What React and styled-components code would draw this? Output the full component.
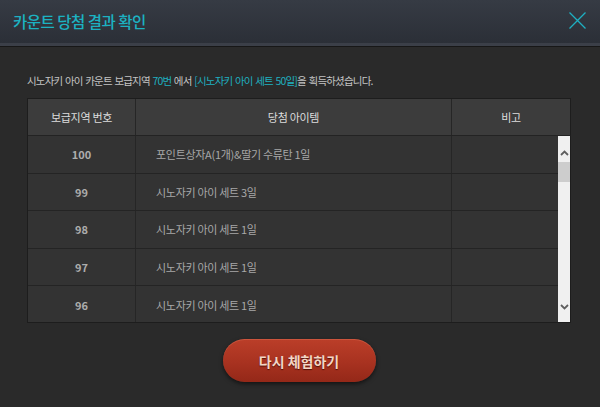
import React from "react";
import styled, { createGlobalStyle } from "styled-components";

const GlobalStyle = createGlobalStyle`
  html, body {
    margin: 0;
    padding: 0;
    background: #2a2a2a;
  }
  body {
    font-family: "Noto Sans CJK KR", "Noto Sans", sans-serif;
  }
  * {
    box-sizing: border-box;
  }
`;

const Window = styled.div`
  width: 600px;
  height: 407px;
  background: #2a2a2a;
  overflow: hidden;
`;

const Header = styled.div`
  display: flex;
  align-items: center;
  justify-content: space-between;
  height: 46px;
  padding: 0 14px 2px 13px;
  background: linear-gradient(#363b44, #2b2f37);
  border-bottom: 3px solid #3b3f48;
  box-shadow: 0 1px 0 #171717;
`;

const Title = styled.h1`
  margin: 0;
  font-size: 15.5px;
  font-weight: 500;
  color: #1cb2c2;
  letter-spacing: -0.5px;
`;

const CloseButton = styled.button`
  display: flex;
  padding: 0;
  border: 0;
  background: none;
  cursor: pointer;
`;

const Body = styled.div`
  padding: 28px 29px 0 27px;
`;

const Info = styled.p`
  margin: 0 0 10px;
  font-size: 10.5px;
  line-height: 14px;
  color: #c4c4c4;
  letter-spacing: -0.8px;
  word-spacing: 1px;
`;

const Accent = styled.span`
  color: #1fb0c0;
`;

const Table = styled.div`
  width: 544px;
  border: 1px solid #1d1d1d;
  border-bottom: 0;
  border-right: 0;
`;

const HeadRow = styled.div`
  display: grid;
  grid-template-columns: 107px 316px 1fr;
  height: 37px;
  background: #3c3c3c;
  border-bottom: 1px solid #232323;
  border-right: 1px solid #1d1d1d;
`;

const HeadCell = styled.div`
  display: flex;
  align-items: center;
  justify-content: center;
  font-size: 11px;
  color: #dcdcdc;
  letter-spacing: -0.3px;
  border-left: ${(p) => (p.first ? "0" : "1px solid #262626")};
`;

const BodyArea = styled.div`
  display: flex;
  height: 187px;
  border-bottom: 1px solid #1d1d1d;
`;

const Rows = styled.div`
  flex: 1;
  overflow: hidden;
`;

const Row = styled.div`
  display: grid;
  grid-template-columns: 107px 316px 1fr;
  height: ${(p) => (p.last ? "37px" : "37.5px")};
  background: #333333;
  border-bottom: ${(p) => (p.last ? "0" : "1px solid #242424")};
`;

const NumCell = styled.div`
  display: flex;
  align-items: center;
  justify-content: center;
  font-size: 11px;
  font-weight: 700;
  color: #adadad;
`;

const ItemCell = styled.div`
  display: flex;
  align-items: center;
  padding-left: 20px;
  font-size: 11px;
  color: #a8a8a8;
  border-left: 1px solid #262626;
  letter-spacing: -0.3px;
`;

const NoteCell = styled.div`
  border-left: 1px solid #262626;
`;

const Scrollbar = styled.div`
  display: flex;
  flex-direction: column;
  width: 13px;
  background: #f0f0f0;
  border-right: 1px solid #1d1d1d;
`;

const ScrollArrow = styled.div`
  display: flex;
  justify-content: center;
  align-items: ${(p) => (p.down ? "flex-end" : "flex-start")};
  height: 26px;
  padding: ${(p) => (p.down ? "0 0 12px" : "14px 0 0")};
`;

const Track = styled.div`
  flex: 1;
`;

const Thumb = styled.div`
  height: 20px;
  background: #cdcdcd;
`;

const Footer = styled.div`
  display: flex;
  justify-content: center;
  padding-top: 16px;
`;

const RetryButton = styled.button`
  width: 153px;
  height: 43px;
  border: 0;
  border-radius: 22px;
  background: linear-gradient(#bb3e29, #a83220 55%, #942818);
  box-shadow: 0 2px 4px rgba(0, 0, 0, 0.55), inset 0 1px 0 rgba(255, 150, 120, 0.25);
  font-family: "Noto Sans CJK KR", sans-serif;
  font-size: 14px;
  font-weight: 700;
  color: #f3d6c6;
  text-shadow: 0 1px 1px rgba(60, 10, 0, 0.8);
  cursor: pointer;
`;

const Chevron = ({ down }) => (
  <svg width="9" height="6" viewBox="0 0 9 6">
    <polyline
      points={down ? "1,1 4.5,4.5 8,1" : "1,5 4.5,1.5 8,5"}
      fill="none"
      stroke="#5f5f5f"
      strokeWidth="1.8"
    />
  </svg>
);

const rows = [
  { num: 100, item: "포인트상자A(1개)&딸기 수류탄 1일" },
  { num: 99, item: "시노자키 아이 세트 3일" },
  { num: 98, item: "시노자키 아이 세트 1일" },
  { num: 97, item: "시노자키 아이 세트 1일" },
  { num: 96, item: "시노자키 아이 세트 1일" },
];

const App = () => (
  <Window>
    <GlobalStyle />
    <Header>
      <Title>카운트 당첨 결과 확인</Title>
      <CloseButton aria-label="닫기">
        <svg width="17" height="17" viewBox="0 0 17 17">
          <path d="M0.5 0.5 L16.5 16.5 M16.5 0.5 L0.5 16.5" stroke="#1eb0c2" strokeWidth="1.3" />
        </svg>
      </CloseButton>
    </Header>
    <Body>
      <Info>
        시노자키 아이 카운트 보급지역 <Accent>70번</Accent> 에서{" "}
        <Accent>[시노자키 아이 세트 50일]</Accent>을 획득하셨습니다.
      </Info>
      <Table>
        <HeadRow>
          <HeadCell first>보급지역 번호</HeadCell>
          <HeadCell>당첨 아이템</HeadCell>
          <HeadCell>비고</HeadCell>
        </HeadRow>
        <BodyArea>
          <Rows>
            {rows.map((r, i) => (
              <Row key={r.num} last={i === rows.length - 1}>
                <NumCell>{r.num}</NumCell>
                <ItemCell>{r.item}</ItemCell>
                <NoteCell />
              </Row>
            ))}
          </Rows>
          <Scrollbar>
            <ScrollArrow>
              <Chevron />
            </ScrollArrow>
            <Thumb />
            <Track />
            <ScrollArrow down>
              <Chevron down />
            </ScrollArrow>
          </Scrollbar>
        </BodyArea>
      </Table>
      <Footer>
        <RetryButton>다시 체험하기</RetryButton>
      </Footer>
    </Body>
  </Window>
);

export default App;
